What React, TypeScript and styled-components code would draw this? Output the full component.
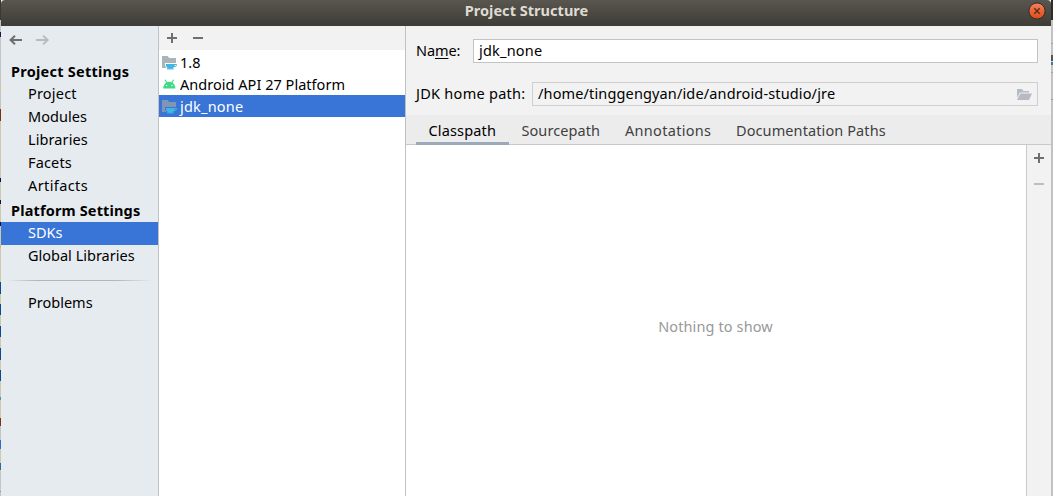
import React from 'react';
import styled, { createGlobalStyle } from 'styled-components';

const GlobalStyle = createGlobalStyle`
  * { box-sizing: border-box; }
  body {
    margin: 0;
    overflow: hidden;
    font-family: "Noto Sans", "Open Sans", sans-serif;
    font-size: 14.5px;
    color: #000;
  }
  svg { display: block; flex: none; }
`;

const Desktop = styled.div`
  display: grid;
  grid-template-columns: 1px 1050px 2px;
  width: 1053px;
  height: 496px;
`;

const LeftEdge = styled.div`
  background: linear-gradient(
    #3a3935 0 20px, #c4c4c4 20px 32px, #1b1a40 32px 37px, #c4c4c4 37px 85px,
    #d9c88c 85px 90px, #c4c4c4 90px 109px, #7a3310 109px 121px, #cdc8ae 121px 178px,
    #0a1250 178px 182px, #cdc8ae 182px 200px, #0a1250 200px 204px, #cdc8ae 204px 222px,
    #0a1250 222px 226px, #cdc8ae 226px 245px, #d7b76a 245px 248px, #cdc8ae 248px 282px,
    #0b4a8c 282px 294px, #cdc8ae 294px 304px, #0b4a8c 304px 315px, #cdc8ae 315px 326px,
    #0b4a8c 326px 337px, #cdc8ae 337px 348px, #0b4a8c 348px 360px, #cdc8ae 360px 370px,
    #0b4a8c 370px 381px, #cdc8ae 381px 397px, #4b97a8 397px 400px, #cdc8ae 400px 418px,
    #7a3310 418px 426px, #c4c4c4 426px 440px, #2e6fc0 440px 449px, #cdc8ae 449px 463px,
    #2a6ba0 463px 470px, #cdc8ae 470px 475px, #c4c4c4 475px 491px, #6d9dba 491px 492px, #c4c4c4 492px
  );
`;

const RightEdge = styled.div`
  background: linear-gradient(
    #2e2d2a 0 20px, #c2c2c2 20px 43px, #a6a6a6 43px 44px, #c2c2c2 44px 55px,
    #555 55px 61px, #d5d5d5 61px 62px, #2f7fa8 62px 65px, #c2c2c2 65px 72px,
    #a6a6a6 72px 73px, #c2c2c2 73px 99px, #999 99px 100px, #c2c2c2 100px
  );
`;

const Dialog = styled.main`
  display: flex;
  flex-direction: column;
  min-width: 0;
`;

const TitleBar = styled.header`
  display: grid;
  grid-template-columns: 1fr auto 1fr;
  align-items: start;
  height: 26px;
  padding-right: 5px;
  border-radius: 4px 4px 0 0;
  background: linear-gradient(#59564f, #3d3c37);
  color: #dfdbd2;
`;

const Title = styled.h1`
  grid-column: 2;
  margin: 0 -3px 0 3px;
  font-size: 14.5px;
  line-height: 20px;
  letter-spacing: 0.03px;
`;

const CloseButton = styled.button`
  justify-self: end;
  padding: 2px 0 0;
  border: 0;
  background: none;
`;

const Body = styled.div`
  display: grid;
  grid-template-columns: 157px 248px 1fr;
  flex: 1;
`;

const Sidebar = styled.nav`
  background: #e6ebf0;
`;

const History = styled.div`
  display: flex;
  gap: 11px;
  height: 33px;
  padding: 6px 7px;
`;

const GroupTitle = styled.h2<{ $spacing: number }>`
  height: 24px;
  margin: 0;
  padding-left: 10px;
  font-size: 14.5px;
  line-height: 24px;
  letter-spacing: ${(p) => p.$spacing}px;
`;

const NavItem = styled.a<{ $selected?: boolean; $spacing?: number }>`
  display: block;
  height: 23px;
  padding-left: 27px;
  line-height: 20px;
  letter-spacing: ${(p) => p.$spacing ?? 0}px;
  background: ${(p) => (p.$selected ? '#3875d6' : 'transparent')};
  color: ${(p) => (p.$selected ? '#fff' : '#000')};
`;

const Separator = styled.hr`
  height: 1px;
  margin: 12px 6px 11px;
  border: 0;
  background: linear-gradient(90deg, transparent, #b3b5b8 20%, #b3b5b8 75%, transparent);
`;

const SdkPanel = styled.section`
  border: solid #c1c1c1;
  border-width: 0 1px;
  background: #fff;
`;

const SdkToolbar = styled.div`
  display: flex;
  gap: 10px;
  height: 24px;
  margin-bottom: 1px;
  padding: 4px 5px;
  background: #f2f2f2;
`;

const SdkRow = styled.div<{ $selected?: boolean; $spacing?: number }>`
  display: flex;
  align-items: center;
  gap: 2px;
  height: 22px;
  padding-left: 3px;
  letter-spacing: ${(p) => p.$spacing ?? 0}px;
  background: ${(p) => (p.$selected ? '#3875d6' : '#fff')};
  color: ${(p) => (p.$selected ? '#fff' : '#000')};
`;

const Details = styled.section`
  display: flex;
  flex-direction: column;
  min-width: 0;
  background: #f2f2f2;
`;

const Form = styled.div`
  display: flex;
  flex-direction: column;
  gap: 19px;
  height: 89px;
  padding: 13px 13px 0 10px;
`;

const Field = styled.div`
  display: flex;
  height: 24px;
`;

const Label = styled.label<{ $width: number; $spacing?: number }>`
  flex: none;
  width: ${(p) => p.$width}px;
  line-height: 22px;
  letter-spacing: ${(p) => p.$spacing ?? 0}px;
`;

const Mnemonic = styled.span`
  text-decoration: underline;
  text-decoration-thickness: 1px;
  text-underline-offset: 2px;
`;

const Input = styled.div<{ $readOnly?: boolean; $spacing: number }>`
  display: flex;
  flex: 1;
  align-items: flex-start;
  justify-content: space-between;
  padding: 0 5px;
  border: 1px solid ${(p) => (p.$readOnly ? '#cfcfcf' : '#c4c4c4')};
  background: ${(p) => (p.$readOnly ? '#f2f2f2' : '#fff')};
  line-height: 20px;
  letter-spacing: ${(p) => p.$spacing}px;

  svg { align-self: center; }
`;

const Tabs = styled.div`
  display: flex;
  height: 30px;
  padding-left: 10px;
  border-bottom: 1px solid #c9c9c9;
  background: #ececec;
`;

const Tab = styled.div<{ $width: number; $active?: boolean; $spacing: number }>`
  width: ${(p) => p.$width}px;
  height: 30px;
  padding-left: 12.5px;
  border-bottom: ${(p) => (p.$active ? '3px solid #9ca9ba' : '0')};
  line-height: 31px;
  white-space: nowrap;
  letter-spacing: ${(p) => p.$spacing}px;
  color: ${(p) => (p.$active ? '#000' : '#3f3f3f')};
`;

const Content = styled.div`
  display: flex;
  flex: 1;
`;

const EmptyList = styled.div`
  display: flex;
  flex: 1;
  align-items: center;
  justify-content: center;
  padding: 10px 1px 0 0;
  background: #fff;
  color: #999;
  letter-spacing: 0.12px;
`;

const SideTools = styled.div`
  display: flex;
  flex-direction: column;
  gap: 10px;
  width: 25px;
  padding: 5px 4px;
  border-left: 1px solid #c9c9c9;
`;

function Arrow({ left }: { left?: boolean }) {
  return (
    <svg width="16" height="16" viewBox="0 0 16 16" fill="none" stroke={left ? '#6e6e6e' : '#b9bbbd'} strokeWidth="2">
      <path d={left ? 'M14 8H2.5M7 3.8L2.6 8L7 12.2' : 'M1 8H12.5M8.2 3.8L12.6 8L8.2 12.2'} />
    </svg>
  );
}

function Plus() {
  return (
    <svg width="16" height="16" viewBox="0 0 16 16" fill="#6e6e6e">
      <path d="M3 7H7V3H9V7H13V9H9V13H7V9H3Z" />
    </svg>
  );
}

function Minus({ color = '#6e6e6e' }: { color?: string }) {
  return (
    <svg width="16" height="16" viewBox="0 0 16 16" fill={color}>
      <path d="M3 7H13V9H3Z" />
    </svg>
  );
}

function JdkIcon({ selected }: { selected?: boolean }) {
  return (
    <svg width="16" height="16" viewBox="0 0 16 16">
      <path fill={selected ? '#8096b4' : '#aab4bb'} d="M0 2H5.6L7.2 4H14V9H3V11.5L4.4 14H0Z" />
      <path fill="#40b6e0" d="M4 10H12.6V11.2C12.6 12.8 11.4 14.2 9.8 14.4H6.8C5.2 14.2 4 12.8 4 11.2Z" />
      <path fill="none" stroke="#40b6e0" d="M12 10.5H14.5V11.2C14.5 12.1 13.6 12.6 12 12.5" />
      <path fill="#40b6e0" d="M5 14.2H11.6V15.4H5Z" />
    </svg>
  );
}

function AndroidIcon() {
  return (
    <svg width="16" height="16" viewBox="0 0 16 16">
      <path d="M3 3.8L4.8 6.8M11.6 3.8L9.8 6.8" stroke="#3ddc84" strokeWidth="1.1" />
      <path fill="#3ddc84" d="M1.2 12.4C1.4 8.4 4 5.7 7.3 5.7S13.2 8.4 13.4 12.4Z" />
      <circle cx="4.6" cy="9.6" r="0.75" fill="#fff" />
      <circle cx="10" cy="9.6" r="0.75" fill="#fff" />
    </svg>
  );
}

function FolderIcon() {
  return (
    <svg width="16" height="16" viewBox="0 0 16 16" fill="#b5bbc0">
      <path d="M1 3H6L7.5 5H13V6.6H4L1 12Z" />
      <path d="M4.4 7.6H16L13 14H1Z" />
    </svg>
  );
}

function CloseIcon() {
  return (
    <svg width="18" height="18" viewBox="0 0 18 18">
      <defs>
        <linearGradient id="closeFill" x1="0" y1="0" x2="0" y2="1">
          <stop offset="0" stopColor="#f4835f" />
          <stop offset="0.5" stopColor="#ed6337" />
          <stop offset="1" stopColor="#df4a17" />
        </linearGradient>
      </defs>
      <circle cx="9" cy="9" r="8.1" fill="url(#closeFill)" stroke="#302d29" />
      <path d="M6.3 6.3L11.7 11.7M11.7 6.3L6.3 11.7" stroke="#54301f" strokeWidth="1.4" />
    </svg>
  );
}

export default function App() {
  return (
    <Desktop>
      <GlobalStyle />
      <LeftEdge />
      <Dialog>
        <TitleBar>
          <Title>Project Structure</Title>
          <CloseButton aria-label="Close"><CloseIcon /></CloseButton>
        </TitleBar>
        <Body>
          <Sidebar>
            <History><Arrow left /><Arrow /></History>
            <GroupTitle $spacing={0.25}>Project Settings</GroupTitle>
            <NavItem $spacing={0.2}>Project</NavItem>
            <NavItem $spacing={0.05}>Modules</NavItem>
            <NavItem $spacing={0.1}>Libraries</NavItem>
            <NavItem $spacing={0.15}>Facets</NavItem>
            <NavItem $spacing={0.4}>Artifacts</NavItem>
            <GroupTitle $spacing={0.15}>Platform Settings</GroupTitle>
            <NavItem $selected>SDKs</NavItem>
            <NavItem>Global Libraries</NavItem>
            <Separator />
            <NavItem>Problems</NavItem>
          </Sidebar>
          <SdkPanel>
            <SdkToolbar><Plus /><Minus /></SdkToolbar>
            <SdkRow><JdkIcon />1.8</SdkRow>
            <SdkRow $spacing={0.03}><AndroidIcon />Android API 27 Platform</SdkRow>
            <SdkRow $selected $spacing={0.2}><JdkIcon selected />jdk_none</SdkRow>
          </SdkPanel>
          <Details>
            <Form>
              <Field>
                <Label $width={57} $spacing={-0.1}>Na<Mnemonic>m</Mnemonic>e:</Label>
                <Input $spacing={0.2}>jdk_none</Input>
              </Field>
              <Field>
                <Label $width={116} $spacing={0.27}>JDK home path:</Label>
                <Input $readOnly $spacing={0.14}>/home/tinggengyan/ide/android-studio/jre<FolderIcon /></Input>
              </Field>
            </Form>
            <Tabs>
              <Tab $width={93} $active $spacing={0.15}>Classpath</Tab>
              <Tab $width={103.5} $spacing={0.07}>Sourcepath</Tab>
              <Tab $width={111} $spacing={0.3}>Annotations</Tab>
              <Tab $width={175} $spacing={0.1}>Documentation Paths</Tab>
            </Tabs>
            <Content>
              <EmptyList>Nothing to show</EmptyList>
              <SideTools><Plus /><Minus color="#bdbdbd" /></SideTools>
            </Content>
          </Details>
        </Body>
      </Dialog>
      <RightEdge />
    </Desktop>
  );
}
